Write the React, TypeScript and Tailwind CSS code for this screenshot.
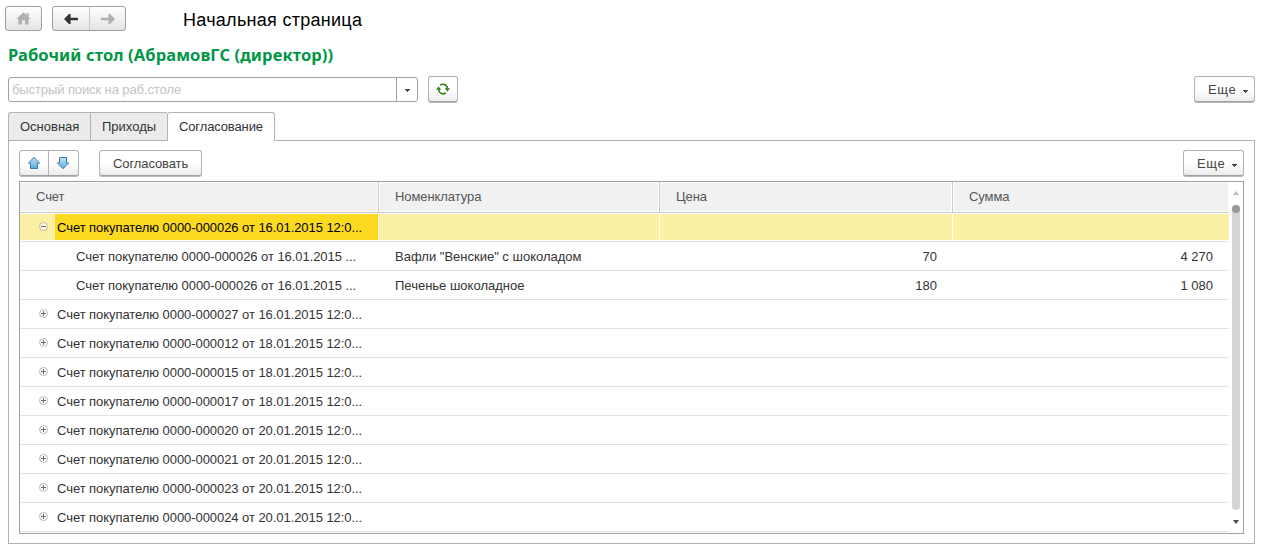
import React from 'react';
import clsx from 'clsx';

type Row = {
  account: string;
  kind: 'open' | 'closed' | 'child';
  item?: string;
  price?: string;
  sum?: string;
};

const rows: Row[] = [
  { kind: 'open', account: 'Счет покупателю 0000-000026 от 16.01.2015 12:0...' },
  {
    kind: 'child',
    account: 'Счет покупателю 0000-000026 от 16.01.2015 ...',
    item: 'Вафли "Венские" с шоколадом',
    price: '70',
    sum: '4 270',
  },
  {
    kind: 'child',
    account: 'Счет покупателю 0000-000026 от 16.01.2015 ...',
    item: 'Печенье шоколадное',
    price: '180',
    sum: '1 080',
  },
  { kind: 'closed', account: 'Счет покупателю 0000-000027 от 16.01.2015 12:0...' },
  { kind: 'closed', account: 'Счет покупателю 0000-000012 от 18.01.2015 12:0...' },
  { kind: 'closed', account: 'Счет покупателю 0000-000015 от 18.01.2015 12:0...' },
  { kind: 'closed', account: 'Счет покупателю 0000-000017 от 18.01.2015 12:0...' },
  { kind: 'closed', account: 'Счет покупателю 0000-000020 от 20.01.2015 12:0...' },
  { kind: 'closed', account: 'Счет покупателю 0000-000021 от 20.01.2015 12:0...' },
  { kind: 'closed', account: 'Счет покупателю 0000-000023 от 20.01.2015 12:0...' },
  { kind: 'closed', account: 'Счет покупателю 0000-000024 от 20.01.2015 12:0...' },
];

const columns = ['Счет', 'Номенклатура', 'Цена', 'Сумма'];

const gridCols = 'grid grid-cols-[359px_281px_293px_276px]';
const button =
  'flex h-[26px] mb-px items-center rounded-[3px] border border-[#b3b3b3] border-b-[#a0a0a0] bg-linear-to-b from-white from-50% to-[#ececec] text-[#444] shadow-[0_1px_0_#b8b8b8]';
const navButton = 'flex h-[25px] rounded-[3px] border border-[#a0a0a0] bg-linear-to-b from-white to-[#e4e4e4]';

const Caret = ({ className }: { className?: string }) => (
  <svg width="5" height="3" viewBox="0 0 5 3" className={className} shapeRendering="crispEdges">
    <path d="M0 0h5v1H4v1H3v1H2V2H1V1H0z" fill="#444" />
  </svg>
);

const NavArrow = ({ color, flip }: { color: string; flip?: boolean }) => (
  <svg width="16" height="12" viewBox="0 0 16 12" className={clsx(flip && '-scale-x-100')}>
    <path d="M1 6 6 1H7.6V4.8H15v2.4H7.6V11H6z" fill={color} />
  </svg>
);

const MoveArrow = ({ down }: { down?: boolean }) => (
  <svg width="14" height="14" viewBox="0 0 14 14" className={clsx(down && 'rotate-180')}>
    <defs>
      <linearGradient id={down ? 'moveDown' : 'moveUp'} x1="0" x2="0" y1={down ? '1' : '0'} y2={down ? '0' : '1'}>
        <stop offset="0" stopColor="#c4e4f7" />
        <stop offset="1" stopColor="#5aaade" />
      </linearGradient>
    </defs>
    <path
      d="M7 1.2 12.6 7.2H10.5V12.5H3.5V7.2H1.4z"
      fill={down ? 'url(#moveDown)' : 'url(#moveUp)'}
      stroke="#3f7ba6"
      strokeLinejoin="round"
    />
  </svg>
);

const RefreshIcon = () => (
  <svg width="14" height="12" viewBox="0 0 14 12">
    <g fill="none" stroke="#2f7d12" strokeWidth="1.5">
      <path d="M4.2 2.2C6.6.2 11 1.4 11.4 5.5" />
      <path d="M9.8 9.8C7.4 11.8 3 10.6 2.6 6.5" />
    </g>
    <path d="M8.8 5.2H14L11.4 8.6zM0 6.8h5.2L2.6 3.4z" fill="#2f7d12" />
  </svg>
);

const TreeToggle = ({ open }: { open: boolean }) => (
  <svg width="9" height="9" viewBox="0 0 9 9" className="block">
    <circle cx="4.5" cy="4.5" r="4" fill="#fff" fillOpacity="0.6" stroke="#b0b0b0" strokeWidth="0.9" />
    <path d={open ? 'M2 4.5h5' : 'M2 4.5h5M4.5 2v5'} stroke="#6b6b6b" />
  </svg>
);

const MoreButton = () => (
  <button className={clsx(button, 'w-[61px] pl-[13px] pt-px tracking-[0.6px]')}>
    Еще
    <Caret className="ml-[7px] mt-[3px]" />
  </button>
);

export default function App() {
  return (
    <div className="flex h-[549px] w-[1261px] flex-col overflow-hidden bg-white font-['Liberation_Sans',Arial,sans-serif] text-[13px] leading-[16px] text-[#333]">
      {/* Navigation */}
      <header className="flex h-[37px] items-center pl-[5px]">
        <button className={clsx(navButton, 'w-[37px] items-center justify-center')} aria-label="Домой">
          <svg width="15" height="13" viewBox="0 0 15 13">
            <path d="M7.5 .3 14.6 7H12.6V12.4H9V8.6H6V12.4H2.4V7H.4zM10.6 1h2v4h-2z" fill="#b0b0b0" />
          </svg>
        </button>
        <div className={clsx(navButton, 'ml-[10px] w-[74px]')}>
          <button className="flex w-[37px] items-center justify-center border-r border-[#c8c8c8]" aria-label="Назад">
            <NavArrow color="#333" />
          </button>
          <button className="flex flex-1 items-center justify-center" aria-label="Вперед">
            <NavArrow color="#b0b0b0" flip />
          </button>
        </div>
        <h1 className="ml-[57px] mt-[2px] text-[18px] leading-[22px] tracking-[0.28px] text-black">Начальная страница</h1>
      </header>

      <h2 className="flex h-[39px] items-center pb-[4px] pl-[8px] font-['Noto_Sans',sans-serif] text-[16.5px] font-bold tracking-[0.1px] text-[#009646]">
        Рабочий стол (АбрамовГС (директор))
      </h2>

      {/* Search */}
      <div className="flex h-[36px] items-start pl-[8px] pr-[6px]">
        <div className="mt-px flex h-[25px] w-[410px] rounded-[3px] border border-[#a0a0a0]">
          <div className="flex flex-1 items-center pl-[3px] tracking-[-0.1px] text-[#c3c3c3]">
            быстрый поиск на раб.столе
          </div>
          <button className="flex w-[21px] items-center justify-center border-l border-[#a0a0a0]" aria-label="Выбрать">
            <Caret className="mt-[2px]" />
          </button>
        </div>
        <button className={clsx(button, 'ml-[10px] mr-auto w-[30px] justify-center')} aria-label="Обновить">
          <RefreshIcon />
        </button>
        <MoreButton />
      </div>

      {/* Tabs */}
      <nav className="z-10 -mb-px ml-[8px] flex h-[29px] text-[#333]">
        <div className="flex w-[82px] items-center rounded-tl-[3px] border border-r-0 border-[#b3b3b3] bg-[#ebebeb] pl-[11px]">
          Основная
        </div>
        <div className="flex w-[77px] items-center border border-r-0 border-[#b3b3b3] bg-[#ebebeb] pl-[11px]">
          Приходы
        </div>
        <div className="flex w-[108px] items-center rounded-t-[3px] border border-b-0 border-[#b3b3b3] bg-white pb-px pl-[11px] tracking-[-0.13px]">
          Согласование
        </div>
      </nav>

      <main className="ml-[8px] flex h-[404px] w-[1247px] flex-col border border-[#b3b3b3] px-[10px] pt-[9px]">
        <div className="flex">
          <div className={clsx(button, 'w-[60px]')}>
            <button className="flex h-full w-[29px] items-center justify-center border-r border-[#b3b3b3]" aria-label="Вверх">
              <MoveArrow />
            </button>
            <button className="flex h-full w-[28px] items-center justify-center" aria-label="Вниз">
              <MoveArrow down />
            </button>
          </div>
          <button className={clsx(button, 'ml-[20px] mr-auto w-[103px] pl-[13px] pt-px tracking-[-0.1px]')}>
            Согласовать
          </button>
          <MoreButton />
        </div>

        {/* Accounts table */}
        <section className="mt-[4px] flex h-[353px] border border-[#a0a0a0]">
          <div className="w-[1209px]">
            <div className={clsx(gridCols, 'h-[31px] border-b border-[#c8c8c8]')}>
              {columns.map((name, i) => (
                <div key={name} className={clsx('py-px', i < 3 && 'border-r border-[#c8c8c8]', i > 0 && 'pl-px', 'pr-px')}>
                  <div className={clsx('flex h-full items-center bg-[#f1f1f1] tracking-[-0.08px] text-[#555]', i > 0 ? 'pl-[15px]' : 'pl-[16px]')}>
                    {name}
                  </div>
                </div>
              ))}
            </div>
            {rows.map((row, i) => {
              const selected = row.kind === 'open';
              const fill = selected && 'bg-[#fcf0a5]';
              return (
                <div key={i} className={clsx(gridCols, 'h-[29px] border-b border-[#e2e2e2] py-px')}>
                  <div className={clsx('mr-px flex items-center', fill)}>
                    {row.kind !== 'child' && (
                      <span className="mb-px ml-[19px] mr-[7px] w-[9px]">
                        <TreeToggle open={selected} />
                      </span>
                    )}
                    <span
                      className={clsx(
                        'flex h-full flex-1 items-center whitespace-nowrap pt-[2px] tracking-[-0.06px]',
                        selected && 'bg-[#fbda20] text-black',
                        row.kind === 'child' ? 'pl-[56px]' : 'pl-[2px]',
                      )}
                    >
                      {row.account}
                    </span>
                  </div>
                  <div className={clsx('mr-px flex items-center pl-[16px] pt-[2px]', fill)}>{row.item}</div>
                  <div className={clsx('mr-px flex items-center justify-end pr-[15px] pt-[2px]', fill)}>{row.price}</div>
                  <div className={clsx('flex items-center justify-end pr-[16px] pt-[2px]', fill)}>{row.sum}</div>
                </div>
              );
            })}
          </div>
          <div className="flex flex-1 flex-col items-center pt-[9px]">
            <svg width="6" height="4" viewBox="0 0 6 4">
              <path d="M3 0 6 4H0z" fill="#bdbdbd" />
            </svg>
            <div className="mt-[10px] h-[305px] w-[8px] rounded-full bg-[#d5d5d5]">
              <div className="h-[8px] rounded-full bg-[#999]" />
            </div>
            <svg width="6" height="4" viewBox="0 0 6 4" className="mt-[10px]">
              <path d="M0 0h6L3 4z" fill="#4a4a4a" />
            </svg>
          </div>
        </section>
      </main>
    </div>
  );
}
